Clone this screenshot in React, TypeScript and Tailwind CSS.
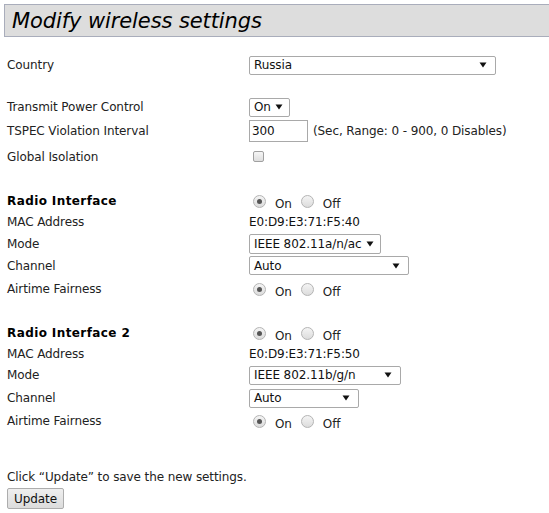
import React from "react";

const font = { fontFamily: '"DejaVu Sans", Verdana, sans-serif' };

function Arrow() {
  return (
    <svg width="8" height="6" viewBox="0 0 8 6" className="shrink-0">
      <path d="M0.5 0.5 L7.5 0.5 L4 5.5 Z" fill="#111" />
    </svg>
  );
}

function Select({ value, w }: { value: string; w: string }) {
  return (
    <div
      className={`flex items-center justify-between h-full border border-[#a9a9a9] rounded-[2px] bg-white pl-[4px] pr-[8px] text-[#111] ${w}`}
    >
      <span>{value}</span>
      <Arrow />
    </div>
  );
}

function Radio({ checked, className = "" }: { checked?: boolean; className?: string }) {
  return (
    <span className={`flex shrink-0 items-center justify-center w-[13px] h-[13px] rounded-full border border-[#b4b4b4] bg-gradient-to-b from-[#f4f4f4] to-[#dcdcdc] ${className}`}>
      {checked && <span className="w-[5px] h-[5px] rounded-full bg-[#555]" />}
    </span>
  );
}

function OnOff() {
  return (
    <div className="flex items-center pl-[4px]">
      <Radio checked />
      <span className="ml-[9px] mt-[5px]">On</span>
      <Radio className="ml-[9px]" />
      <span className="ml-[9px] mt-[5px]">Off</span>
    </div>
  );
}

function Label({ children, bold }: { children: React.ReactNode; bold?: boolean }) {
  return (
    <div className={`w-[242px] shrink-0 ${bold ? "font-bold text-black tracking-[0.4px]" : "text-[#222]"}`}>{children}</div>
  );
}

export default function App() {
  return (
    <div className="w-[549px] h-[513px] overflow-hidden bg-white text-[12px] leading-[14px] text-[#222] tracking-[-0.1px]" style={font}>
      <div className="ml-[4px] mt-[4px] w-[560px] h-[33px] border border-[#a9adbb] bg-[#dddddd] flex items-center pl-[7px]">
        <span className="italic text-[21px] leading-[26px] text-black tracking-[-0.1px]">Modify wireless settings</span>
      </div>

      <div className="pl-[7px]">
        <div className="mt-[18px] h-[20px] flex items-center">
          <Label>Country</Label>
          <div className="h-[19px]"><Select value="Russia" w="w-[247px]" /></div>
        </div>

        <div className="mt-[22px] h-[20px] flex items-center">
          <Label>Transmit Power Control</Label>
          <div className="h-[19px]"><Select value="On" w="w-[41px] !pr-[6px]" /></div>
        </div>

        <div className="mt-[3px] h-[22px] flex items-center">
          <Label>TSPEC Violation Interval</Label>
          <div className="h-[22px] w-[59px] border border-[#a9a9a9] flex items-center pl-[2px] text-[#111]">300</div>
          <span className="ml-[5px]">(Sec, Range: 0 - 900, 0 Disables)</span>
        </div>

        <div className="mt-[4px] h-[22px] flex items-center">
          <Label>Global Isolation</Label>
          <span className="ml-[4px] mt-[-2px] w-[11px] h-[11px] rounded-[2px] border border-[#a0a0a0] bg-gradient-to-b from-[#f6f6f6] to-[#dedede]" />
        </div>

        <div className="mt-[22px] h-[22px] flex items-center">
          <Label bold>Radio Interface</Label>
          <OnOff />
        </div>
        <div className="h-[20px] flex items-center">
          <Label>MAC Address</Label>
          <span className="text-[#111]">E0:D9:E3:71:F5:40</span>
        </div>
        <div className="mt-[1px] h-[22px] flex items-center">
          <Label>Mode</Label>
          <div className="h-[20px]"><Select value="IEEE 802.11a/n/ac" w="w-[132px] !pr-[6px]" /></div>
        </div>
        <div className="h-[21px] flex items-center">
          <Label>Channel</Label>
          <div className="h-[19px]"><Select value="Auto" w="w-[160px]" /></div>
        </div>
        <div className="mt-[2px] h-[22px] flex items-center">
          <Label>Airtime Fairness</Label>
          <OnOff />
        </div>

        <div className="mt-[22px] h-[22px] flex items-center">
          <Label bold>Radio Interface 2</Label>
          <OnOff />
        </div>
        <div className="h-[20px] flex items-center">
          <Label>MAC Address</Label>
          <span className="text-[#111]">E0:D9:E3:71:F5:50</span>
        </div>
        <div className="mt-[1px] h-[20px] flex items-center">
          <Label>Mode</Label>
          <div className="h-[19px]"><Select value="IEEE 802.11b/g/n" w="w-[152px]" /></div>
        </div>
        <div className="mt-[3px] h-[20px] flex items-center">
          <Label>Channel</Label>
          <div className="h-[19px]"><Select value="Auto" w="w-[110px]" /></div>
        </div>
        <div className="mt-[2px] h-[22px] flex items-center">
          <Label>Airtime Fairness</Label>
          <OnOff />
        </div>

        <div className="mt-[35px] h-[20px] flex items-center">Click “Update” to save the new settings.</div>
        <div className="mt-[1px] h-[21px] w-[57px] border border-[#adadad] rounded-[2px] bg-gradient-to-b from-[#efefef] to-[#dcdcdc] flex items-center justify-center text-[#111]">
          Update
        </div>
      </div>
    </div>
  );
}
